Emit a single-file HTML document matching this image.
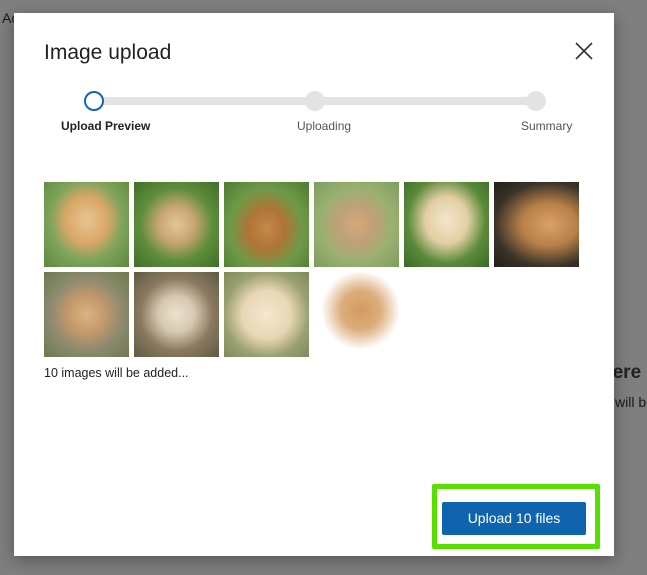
<!DOCTYPE html>
<html><head><style>
body{margin:0;width:647px;height:575px;background:#7f7f7f;position:relative;overflow:hidden;font-family:"Liberation Sans",sans-serif}
.bg{position:absolute;color:#1a1a1a}
.modal{position:absolute;left:14px;top:13px;width:600px;height:543px;background:#fff;box-shadow:0 4px 16px rgba(0,0,0,.35)}
.t{position:absolute;left:30px;top:28px;font-size:21px;color:#222}
.x{position:absolute;left:560px;top:28px}
.track{position:absolute;left:80px;top:84px;width:442px;height:8px;background:#e3e3e3}
.dot{position:absolute;width:20px;height:20px;border-radius:50%;background:#e3e3e3;top:78px}
.lbl{position:absolute;top:106px;font-size:12px;color:#555}
.img{position:absolute;width:85px;height:85px}
.cap{position:absolute;left:30px;top:353px;font-size:12.5px;color:#222}
.green{position:absolute;left:418px;top:471px;width:158px;height:55px;border:5px solid #55e000;border-radius:2px}
.btn{position:absolute;left:428px;top:489px;width:144px;height:33px;background:#0f64b0;border-radius:2px;color:#fff;font-size:14px;text-align:center;line-height:33px}
</style></head><body>
<div class="bg" style="left:2px;top:10px;font-size:14px">Ac</div>
<div class="bg" style="left:601px;top:362px;font-size:19px;font-weight:bold;color:#222">here</div>
<div class="bg" style="left:615px;top:394px;font-size:14px">will b</div>
<div class="modal">
<div class="t">Image upload</div>
<svg class="x" width="20" height="20" viewBox="0 0 20 20"><path d="M2 2L18 18M18 2L2 18" stroke="#333" stroke-width="1.6"/></svg>
<div class="track"></div>
<div class="dot" style="left:70px;background:#fff;border:2px solid #1565b5;width:16px;height:16px"></div>
<div class="dot" style="left:291px"></div>
<div class="dot" style="left:512px"></div>
<div class="lbl" style="left:47px;color:#222;font-weight:bold">Upload Preview</div>
<div class="lbl" style="left:283px">Uploading</div>
<div class="lbl" style="left:507px">Summary</div>

<div class="img" style="left:30px;top:169px;background:radial-gradient(ellipse at 50% 45%,#e8c490 0,#d9a768 35%,#7ea45a 60%,#5b8a3e 100%)"></div>
<div class="img" style="left:120px;top:169px;background:radial-gradient(ellipse at 50% 50%,#e2c79a 0,#c9a472 30%,#5e8e3a 60%,#3f6e2a 100%)"></div>
<div class="img" style="left:210px;top:169px;background:radial-gradient(ellipse at 50% 55%,#c48a4a 0,#b07436 30%,#6e9a48 60%,#4e7a32 100%)"></div>
<div class="img" style="left:300px;top:169px;background:radial-gradient(ellipse at 50% 50%,#d4a97a 0,#bfa07a 30%,#9ab070 60%,#7c9e5e 100%)"></div>
<div class="img" style="left:390px;top:169px;background:radial-gradient(ellipse at 50% 45%,#f2e6cc 0,#e4cfa4 35%,#5a8a3a 65%,#3b6a28 100%)"></div>
<div class="img" style="left:480px;top:169px;background:radial-gradient(ellipse at 65% 50%,#d9a265 0,#b8804a 35%,#3a3428 70%,#1e1e18 100%)"></div>
<div class="img" style="left:30px;top:259px;background:radial-gradient(ellipse at 50% 50%,#d8b486 0,#c49a6a 30%,#8d8a70 60%,#6b7a4a 100%)"></div>
<div class="img" style="left:120px;top:259px;background:radial-gradient(ellipse at 50% 50%,#ece2d0 0,#d6c8b0 30%,#8a7a60 60%,#5e5a44 100%)"></div>
<div class="img" style="left:210px;top:259px;background:radial-gradient(ellipse at 50% 50%,#f4e8d0 0,#e8d6b4 40%,#9aa070 70%,#7e8a5a 100%)"></div>
<div class="img" style="left:300px;top:259px;background:radial-gradient(ellipse at 55% 45%,#d29a60 0,#dcae7c 30%,#fff 60%,#fff 100%)"></div>

<div class="cap">10 images will be added...</div>
<div class="green"></div>
<div class="btn">Upload 10 files</div>
</div>
</body></html>
